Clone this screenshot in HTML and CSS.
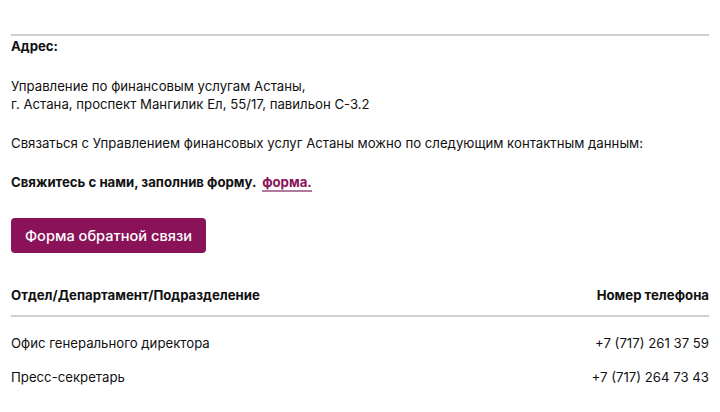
FILE: index.html
```html
<!DOCTYPE html>
<html lang="ru">
<head>
  <meta charset="UTF-8">
  <title>Контакты</title>
  <link rel="stylesheet" href="styles.css">
</head>
<body>
  <div class="container">
    <div class="address-block">
      <p class="label first">Адрес:</p>
      <p>Управление по финансовым услугам Астаны,<br>г. Астана, проспект Мангилик Ел, 55/17, павильон С-3.2</p>
      <p>Связаться с Управлением финансовых услуг Астаны можно по следующим контактным данным:</p>
      <p class="label">Свяжитесь с нами, заполнив форму. <a href="#" class="link">форма.</a></p>
      <button class="btn">Форма обратной связи</button>
    </div>

    <table class="contacts">
      <thead>
        <tr>
          <th>Отдел/Департамент/Подразделение</th>
          <th class="phone">Номер телефона</th>
        </tr>
      </thead>
      <tbody>
        <tr>
          <td>Офис генерального директора</td>
          <td class="phone">+7 (717) 261 37 59</td>
        </tr>
        <tr>
          <td>Пресс-секретарь</td>
          <td class="phone">+7 (717) 264 73 43</td>
        </tr>
      </tbody>
    </table>
  </div>
</body>
</html>
```

FILE: styles.css
```css
body {
  margin: 0;
  font-family: Inter, 'Noto Sans', sans-serif;
  font-size: 13.2px;
  color: #111;
  background: #fff;
}

.container {
  padding: 34px 11px 0;
}

.address-block {
  border-top: 2px solid #cfcfcf;
  padding-top: 1px;
}

.address-block p {
  margin: 0 0 21px;
  line-height: 18px;
}

.address-block p.first {
  margin-bottom: 22px;
}

.label {
  font-weight: 700;
}

.link {
  color: #8a1258;
  text-decoration: none;
  border-bottom: 2px solid #b07a9c;
  margin-left: 3px;
}

.btn {
  display: block;
  background-color: #8a1258;
  color: #fff;
  border: none;
  border-radius: 4px;
  font-family: inherit;
  font-size: 14.6px;
  font-weight: 500;
  padding: 0 14px;
  height: 35px;
  margin-top: 27px;
  cursor: pointer;
}

.contacts {
  width: 100%;
  border-collapse: collapse;
  margin-top: 34px;
}

.contacts th {
  text-align: left;
  font-weight: 700;
  line-height: 16px;
  padding: 0 0 12px;
  border-bottom: 2px solid #cfcfcf;
}

.contacts td {
  line-height: 18px;
  padding: 17px 0 0;
}

.contacts tbody tr + tr td {
  padding-top: 16px;
}

.contacts .phone {
  text-align: right;
}
```
